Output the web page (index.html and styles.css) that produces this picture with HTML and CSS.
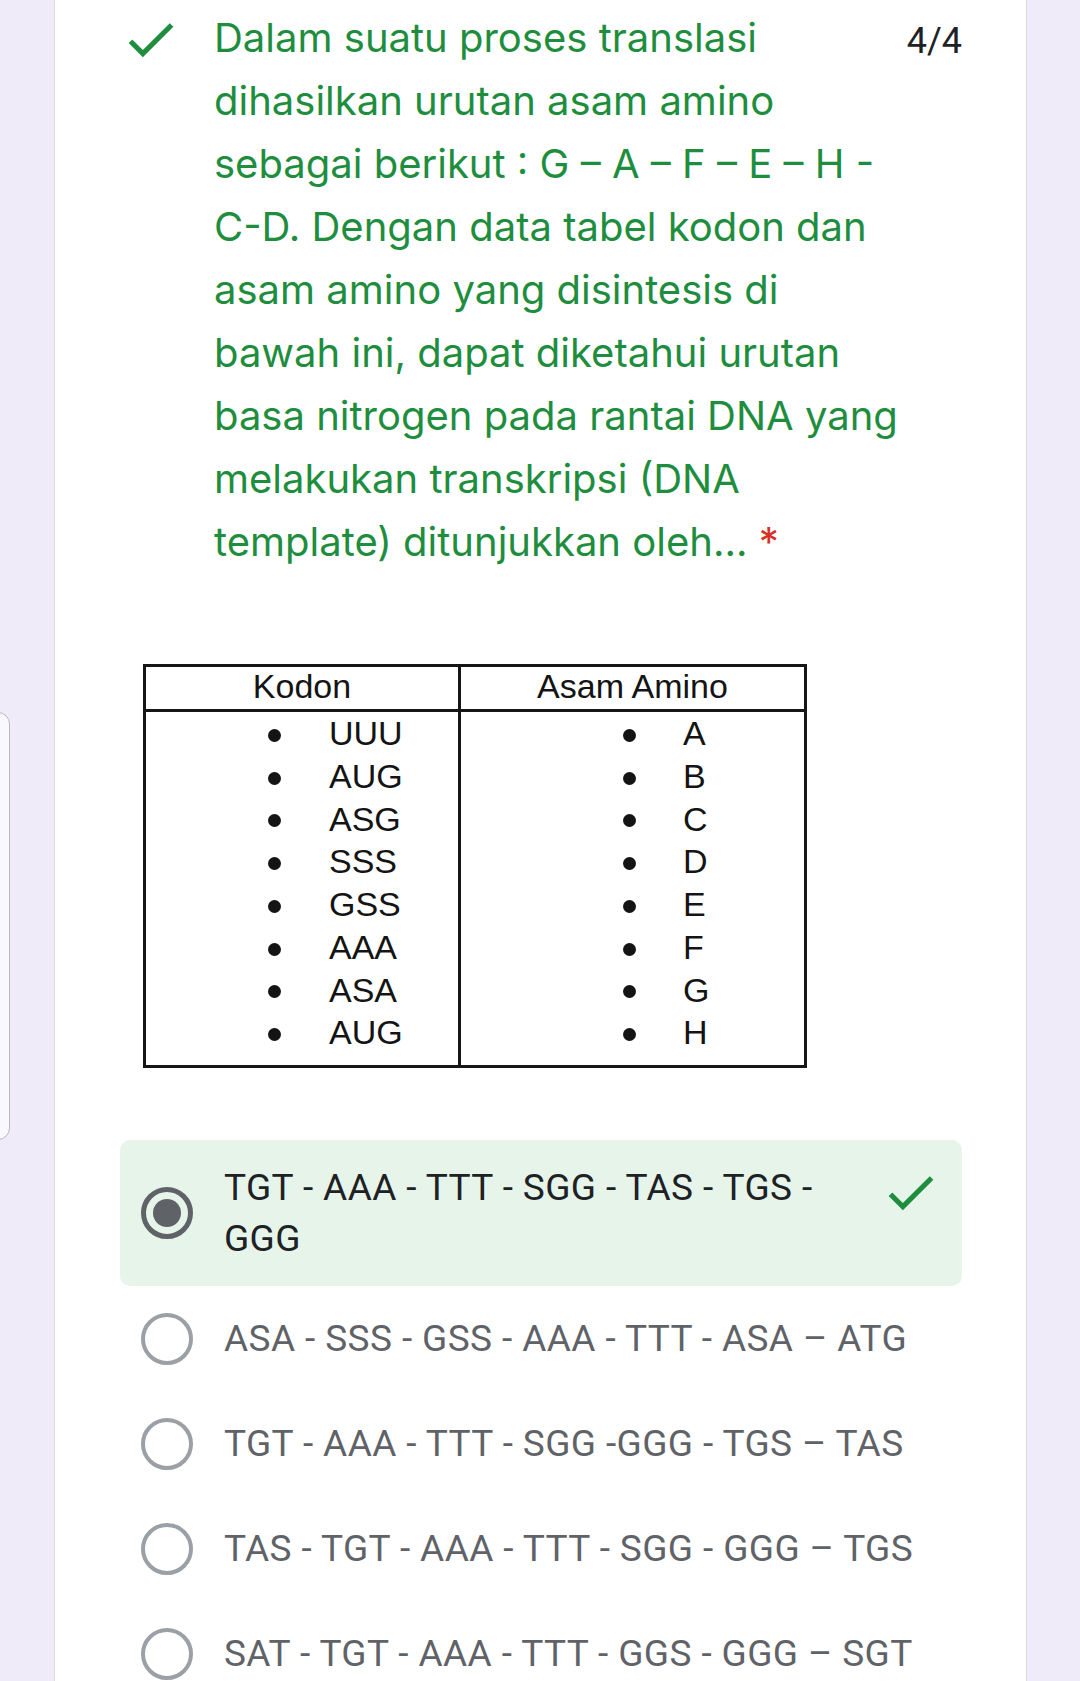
FILE: index.html
```html
<!DOCTYPE html>
<html lang="id">
<head>
<meta charset="utf-8">
<title>Kuis</title>
<link rel="stylesheet" href="styles.css">
</head>
<body>
<div class="side-tab"></div>
<main class="card">
  <div class="q-head">
    <svg class="q-check" viewBox="0 0 24 24" aria-hidden="true"><path d="M9 16.17L4.83 12l-1.42 1.41L9 19 21 7l-1.41-1.41z"/></svg>
    <div class="q-title">Dalam suatu proses translasi<br>dihasilkan urutan asam amino<br>sebagai berikut : G – A – F – E – H -<br>C-D. Dengan data tabel kodon dan<br>asam amino yang disintesis di<br>bawah ini, dapat diketahui urutan<br>basa nitrogen pada rantai DNA yang<br>melakukan transkripsi (DNA<br>template) ditunjukkan oleh... <span class="req">*</span></div>
    <div class="q-score">4/4</div>
  </div>

  <div class="q-figure">
    <table class="codon">
      <thead>
        <tr><th>Kodon</th><th>Asam Amino</th></tr>
      </thead>
      <tbody>
        <tr>
          <td class="c1">
            <ul class="blist">
              <li>UUU</li><li>AUG</li><li>ASG</li><li>SSS</li><li>GSS</li><li>AAA</li><li>ASA</li><li>AUG</li>
            </ul>
          </td>
          <td class="c2">
            <ul class="blist">
              <li>A</li><li>B</li><li>C</li><li>D</li><li>E</li><li>F</li><li>G</li><li>H</li>
            </ul>
          </td>
        </tr>
      </tbody>
    </table>
  </div>

  <div class="options">
    <div class="option selected">
      <span class="radio on"></span>
      <span class="opt-text">TGT - AAA - TTT - SGG - TAS - TGS - GGG</span>
      <svg class="opt-check" viewBox="0 0 24 24" aria-hidden="true"><path d="M9 16.17L4.83 12l-1.42 1.41L9 19 21 7l-1.41-1.41z"/></svg>
    </div>
    <div class="option">
      <span class="radio"></span>
      <span class="opt-text">ASA - SSS - GSS - AAA - TTT - ASA – ATG</span>
    </div>
    <div class="option">
      <span class="radio"></span>
      <span class="opt-text">TGT - AAA - TTT - SGG -GGG - TGS – TAS</span>
    </div>
    <div class="option">
      <span class="radio"></span>
      <span class="opt-text">TAS - TGT - AAA - TTT - SGG - GGG – TGS</span>
    </div>
    <div class="option">
      <span class="radio"></span>
      <span class="opt-text">SAT - TGT - AAA - TTT - GGS - GGG – SGT</span>
    </div>
  </div>
</main>
</body>
</html>
```

FILE: styles.css
```css
html, body {
  margin: 0;
  padding: 0;
  height: 1681px;
  overflow: hidden;
}

body {
  position: relative;
  background: #f0ebf8;
  font-family: Roboto, "Liberation Sans", Arial, sans-serif;
}

.side-tab {
  position: absolute;
  left: -40px;
  top: 712px;
  width: 50px;
  height: 428px;
  box-sizing: border-box;
  border: 1.5px solid #b9b9c0;
  border-radius: 12px;
  background: #f9f8fd;
}

.card {
  margin-left: 54px;
  width: 973px;
  min-height: 1681px;
  box-sizing: border-box;
  background: #ffffff;
  border-left: 1px solid #dadce0;
  border-right: 1px solid #dadce0;
}

/* header */
.q-head {
  display: flex;
  align-items: flex-start;
  padding: 7px 64px 0 65px;
}

.q-check {
  width: 61px;
  height: 61px;
  flex: none;
  margin-top: 2px;
  fill: #1e8e3e;
}

.q-title {
  flex: 1;
  margin-left: 33px;
  margin-top: -1px;
  font-family: Inter, Roboto, sans-serif;
  font-size: 40px;
  line-height: 63px;
  color: #1e8e3e;
  white-space: nowrap;
}

.req {
  color: #d93025;
}

.q-score {
  flex: none;
  margin-top: 3px;
  font-size: 36px;
  line-height: 63px;
  color: #202124;
}

/* table figure */
.q-figure {
  margin: 91px 0 0 88px;
}

.codon {
  width: 664px;
  border-collapse: collapse;
  table-layout: fixed;
  font-family: "Liberation Sans", Arial, sans-serif;
  color: #141414;
  border: 3px solid #161616;
}

.codon th {
  font-weight: normal;
  font-size: 34px;
  line-height: 38px;
  padding: 0 0 4px 0;
  text-align: center;
  border: 3px solid #161616;
}

.codon th:first-child,
.codon td.c1 {
  width: 312px;
}

.codon td {
  padding: 0 0 11px 0;
  vertical-align: top;
  border-left: 3px solid #161616;
  border-right: 3px solid #161616;
}

.codon td.c1 {
  padding-left: 122px;
}

.codon td.c2 {
  padding-left: 162px;
}

.blist {
  list-style: none;
  margin: 0;
  padding: 0;
  font-size: 34px;
  line-height: 42.75px;
}

.blist li {
  display: flex;
  align-items: center;
}

.blist li::before {
  content: "";
  width: 13px;
  height: 13px;
  border-radius: 50%;
  background: #141414;
  margin: 4px 48px 0 0;
  flex: none;
}

.c2 .blist li::before {
  margin-right: 47px;
}

/* options */
.options {
  margin: 72px 0 0 65px;
  width: 842px;
}

.option {
  display: flex;
  align-items: center;
  padding: 26.5px 30px 26.5px 21px;
  border-radius: 10px;
}

.option.selected {
  background: #e6f4ea;
  padding-top: 22px;
  padding-bottom: 22px;
}

.radio {
  flex: none;
  width: 52px;
  height: 52px;
  box-sizing: border-box;
  border: 4.5px solid #9aa0a6;
  border-radius: 50%;
  display: flex;
  align-items: center;
  justify-content: center;
}

.radio.on {
  border: 5px solid #5f6368;
}

.radio.on::after {
  content: "";
  width: 28px;
  height: 28px;
  border-radius: 50%;
  background: #5f6368;
}

.opt-text {
  flex: 1;
  margin-left: 31px;
  font-size: 37px;
  letter-spacing: 0.4px;
  line-height: 51px;
  color: #5f6368;
}

.selected .opt-text {
  color: #202124;
}

.opt-check {
  flex: none;
  align-self: flex-start;
  width: 61px;
  height: 61px;
  margin: 0 -9px 0 20px;
  fill: #1e8e3e;
}
```
